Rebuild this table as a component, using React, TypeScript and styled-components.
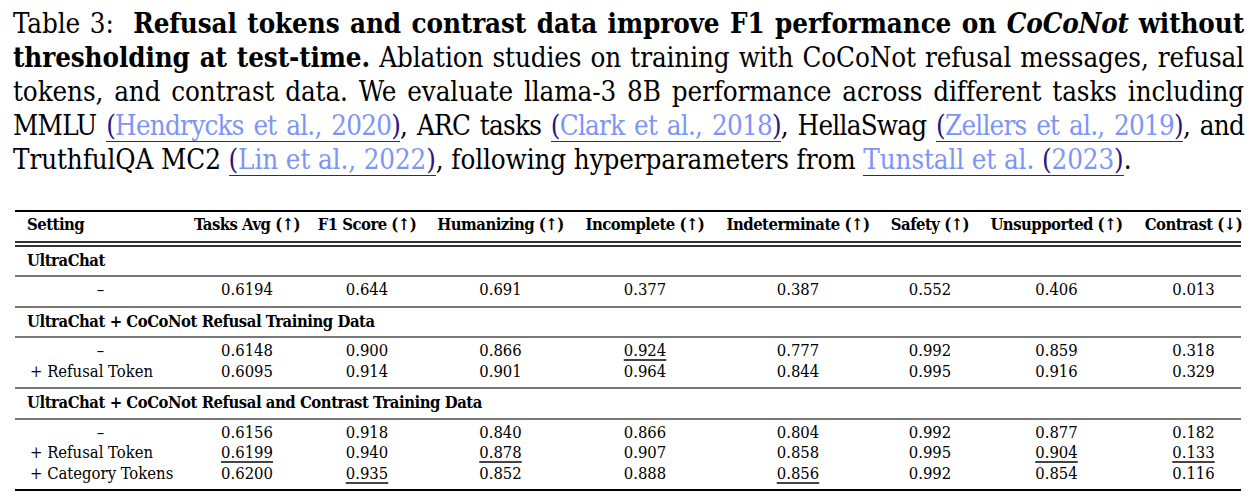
import React from 'react';
import styled, { createGlobalStyle } from 'styled-components';

const GlobalStyle = createGlobalStyle`
  html, body {
    margin: 0;
    padding: 0;
    background: #ffffff;
  }
  body {
    font-family: "DejaVu Serif Condensed", "DejaVu Serif", "Liberation Serif", serif;
    color: #000;
  }
`;

const Page = styled.div`
  width: 1250px;
  height: 497px;
  overflow: hidden;
  padding-top: 6px;
  box-sizing: border-box;
`;

const Caption = styled.div`
  margin: 0 6px 0 13px;
  font-size: 27.5px;
  line-height: 34px;
`;

// each caption line is laid out like the PDF: justified except the last
const CapLine = styled.div<{ $last?: boolean; $tight?: number }>`
  text-align: justify;
  text-align-last: ${(p) => (p.$last ? 'left' : 'justify')};
  letter-spacing: ${(p) => p.$tight ?? -0.1}px;
`;

const Bold = styled.b`
  font-weight: bold;
`;

const BoldItalic = styled.b`
  font-weight: bold;
  font-style: italic;
`;

const Cite = styled.span`
  color: #7d95f7;
  border-bottom: 1.5px solid #2020c0;
`;

const Paren = styled.span`
  color: #2a1580;
`;

const cols = '171px 122px 118px 149px 140px 166px 98px 155px 107px';

const Table = styled.div`
  margin: 34px 0 0 15px;
  width: 1226px;
  font-size: 16.5px;
  line-height: 20.5px;
  border-top: 2px solid #000;
  border-bottom: 2px solid #000;
`;

const Row = styled.div`
  display: grid;
  grid-template-columns: ${cols};
`;

const HeadRow = styled(Row)`
  font-weight: bold;
  letter-spacing: -0.5px;
  padding: 3px 0 5px;
  border-bottom: 6px double #333;
`;

const Group = styled.div<{ $rule?: boolean }>`
  padding: 3px 0 5px;
  border-bottom: ${(p) => (p.$rule ? '2px solid #777' : 'none')};
`;

const SectionRow = styled.div`
  font-weight: bold;
  letter-spacing: -0.45px;
  padding: 4px 12px;
  border-bottom: 2px solid #777;
`;

const Cell = styled.div<{ $align?: 'left' | 'center'; $indent?: number }>`
  display: flex;
  justify-content: ${(p) => (p.$align === 'left' ? 'flex-start' : 'center')};
  white-space: nowrap;
  padding: 0 12px 0 ${(p) => 12 + (p.$indent || 0)}px;

  &:last-child {
    padding-right: 0;
  }
`;

const Under = styled.span`
  text-decoration: underline;
  text-decoration-thickness: 1.5px;
  text-underline-offset: 3px;
  text-decoration-color: #444;
`;

const headers = [
  'Setting',
  'Tasks Avg (↑)',
  'F1 Score (↑)',
  'Humanizing (↑)',
  'Incomplete (↑)',
  'Indeterminate (↑)',
  'Safety (↑)',
  'Unsupported (↑)',
  'Contrast (↓)',
];

const groups: { title: string; rows: string[][] }[] = [
  {
    title: 'UltraChat',
    rows: [['–', '0.6194', '0.644', '0.691', '0.377', '0.387', '0.552', '0.406', '0.013']],
  },
  {
    title: 'UltraChat + CoCoNot Refusal Training Data',
    rows: [
      ['–', '0.6148', '0.900', '0.866', '_0.924', '0.777', '0.992', '0.859', '0.318'],
      ['+ Refusal Token', '0.6095', '0.914', '0.901', '0.964', '0.844', '0.995', '0.916', '0.329'],
    ],
  },
  {
    title: 'UltraChat + CoCoNot Refusal and Contrast Training Data',
    rows: [
      ['–', '0.6156', '0.918', '0.840', '0.866', '0.804', '0.992', '0.877', '0.182'],
      ['+ Refusal Token', '_0.6199', '0.940', '_0.878', '0.907', '0.858', '0.995', '_0.904', '_0.133'],
      ['+ Category Tokens', '0.6200', '_0.935', '0.852', '0.888', '_0.856', '0.992', '0.854', '0.116'],
    ],
  },
];

function Value({ v }: { v: string }) {
  if (v.startsWith('_')) return <Under>{v.slice(1)}</Under>;
  return <>{v}</>;
}

function App() {
  return (
    <Page>
      <GlobalStyle />
      <Caption>
        <CapLine>
          Table 3:&nbsp; <Bold>Refusal tokens and contrast data improve F1 performance on </Bold>
          <BoldItalic>CoCoNot</BoldItalic> <Bold>without</Bold>
        </CapLine>
        <CapLine>
          <Bold>thresholding at test-time.</Bold> Ablation studies on training with CoCoNot refusal messages, refusal
        </CapLine>
        <CapLine>
          tokens, and contrast data. We evaluate llama-3 8B performance across different tasks including
        </CapLine>
        <CapLine $tight={-0.75}>
          MMLU{' '}
          <Cite>
            <Paren>(</Paren>Hendrycks et al., 2020<Paren>)</Paren>
          </Cite>
          , ARC tasks{' '}
          <Cite>
            <Paren>(</Paren>Clark et al., 2018<Paren>)</Paren>
          </Cite>
          , HellaSwag{' '}
          <Cite>
            <Paren>(</Paren>Zellers et al., 2019<Paren>)</Paren>
          </Cite>
          , and
        </CapLine>
        <CapLine $last>
          TruthfulQA MC2{' '}
          <Cite>
            <Paren>(</Paren>Lin et al., 2022<Paren>)</Paren>
          </Cite>
          , following hyperparameters from{' '}
          <Cite>
            Tunstall et al. <Paren>(</Paren>2023<Paren>)</Paren>
          </Cite>
          .
        </CapLine>
      </Caption>

      <Table>
        <HeadRow>
          {headers.map((h, i) => (
            <Cell key={h} $align={i === 0 ? 'left' : 'center'}>
              {h}
            </Cell>
          ))}
        </HeadRow>
        {groups.map((g, gi) => (
          <React.Fragment key={g.title}>
            <SectionRow>{g.title}</SectionRow>
            <Group $rule={gi < groups.length - 1}>
              {g.rows.map((r, ri) => (
                <Row key={ri}>
                  {r.map((v, ci) => {
                    const isLabel = ci === 0 && v !== '–';
                    return (
                      <Cell key={ci} $align={isLabel ? 'left' : 'center'} $indent={isLabel ? 3 : 0}>
                        <Value v={v} />
                      </Cell>
                    );
                  })}
                </Row>
              ))}
            </Group>
          </React.Fragment>
        ))}
      </Table>
    </Page>
  );
}

export default App;
